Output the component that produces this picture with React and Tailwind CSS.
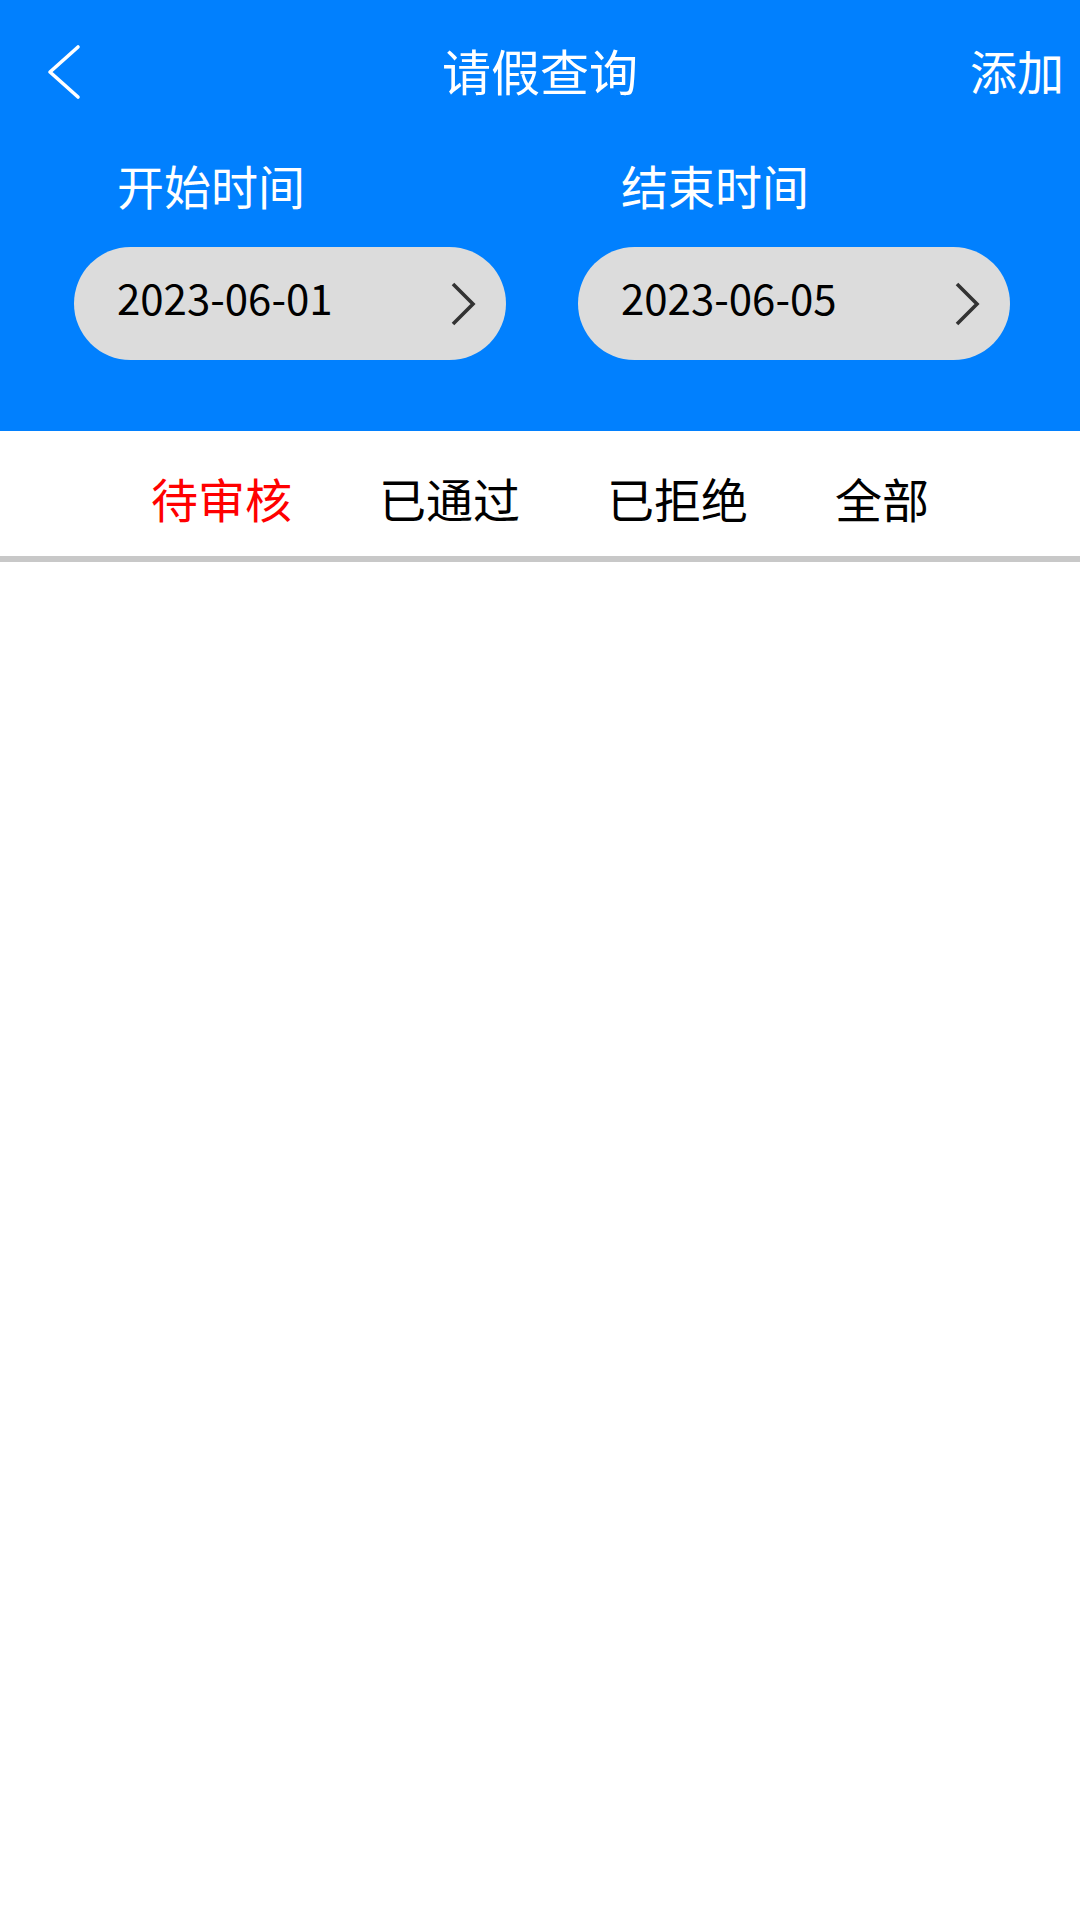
import React, { useState } from 'react';

const tabs = ['待审核', '已通过', '已拒绝', '全部'];

const ChevronRight = () => (
    <svg width="26" height="44" viewBox="0 0 26 44" fill="none">
        <polyline points="3,2 23,22 3,42" stroke="#333333" strokeWidth="3.6" strokeLinejoin="miter" />
    </svg>
);

const DatePill = ({ label, value }) => (
    <div className="flex flex-col">
        <div className="pl-[43px] text-[47px] leading-none text-white">{label}</div>
        <div className="mt-[39px] h-[113px] rounded-full bg-[#dcdcdc] flex items-center justify-between pl-[43px] pr-[30px]">
            <span className="text-[42px] leading-none text-black -mt-[13px]">{value}</span>
            <ChevronRight />
        </div>
    </div>
);

const App = () => {
    const [activeTab, setActiveTab] = useState(0);

    return (
        <div className="min-h-screen bg-white" style={{ fontFamily: '"Noto Sans CJK SC", "Noto Sans", sans-serif' }}>
            {/* header */}
            <div className="bg-[#0180fe] h-[431px]">
                <div className="h-[142px] grid grid-cols-3 items-center">
                    <div className="pl-[47px] pt-[2px]">
                        <svg width="36" height="56" viewBox="0 0 36 56" fill="none">
                            <polyline points="31,3 3,28 31,53" stroke="#ffffff" strokeWidth="3.6" strokeLinecap="round" strokeLinejoin="round" />
                        </svg>
                    </div>
                    <div className="text-center text-[49px] leading-none text-white whitespace-nowrap -mt-[3px]">请假查询</div>
                    <div className="text-right pr-[16px] text-[47px] leading-none text-white -mt-[3px]">添加</div>
                </div>

                <div className="mt-[19px] pl-[74px] pr-[70px] grid grid-cols-2 gap-[72px]">
                    <DatePill label="开始时间" value="2023-06-01" />
                    <DatePill label="结束时间" value="2023-06-05" />
                </div>
            </div>

            {/* tabs */}
            <div className="h-[131px] flex items-center justify-center gap-[87px] pt-[8px] border-b-[6px] border-[#c8c8c8]">
                {tabs.map((t, i) => (
                    <button
                        key={t}
                        onClick={() => setActiveTab(i)}
                        className={i === activeTab ? 'text-[47px] leading-none text-[#ff0000]' : 'text-[47px] leading-none text-black'}
                    >
                        {t}
                    </button>
                ))}
            </div>
        </div>
    );
};

export default App;
